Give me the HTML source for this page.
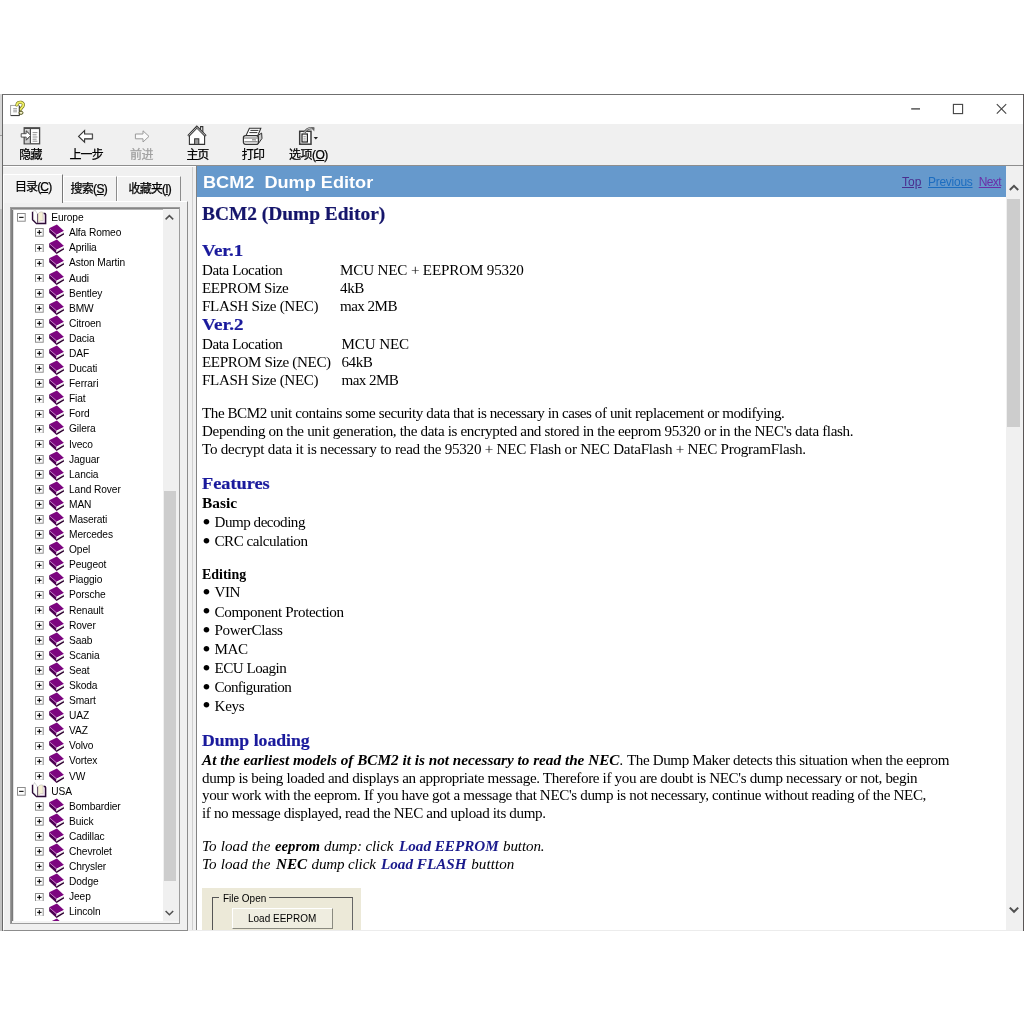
<!DOCTYPE html>
<html lang="zh"><head><meta charset="utf-8"><title>BCM2 Dump Editor</title>
<style>
html,body{margin:0;padding:0;background:#fff;}
body{width:1024px;height:1024px;position:relative;overflow:hidden;font-family:'Liberation Sans', sans-serif;}
.abs,.t,.ic{position:absolute;}
.t{white-space:pre;line-height:0;}
.t u{text-decoration:underline;}
#win{left:2px;top:94px;width:1022px;height:837px;background:#f0f0f0;}
#treeclip{left:0;top:209px;width:163px;height:712px;overflow:hidden;}
</style></head><body>
<div class="abs" style="left:0;top:94px;width:2px;height:837px;background:#c2c2c2"></div>
<div class="abs" style="left:0;top:94px;width:2px;height:115px;background:#dcdcdc"></div>
<div class="abs" style="left:0;top:94px;width:2px;height:41px;background:#d6d6d6"></div>
<div class="abs" style="left:0;top:135px;width:2px;height:1px;background:#9a9a9a"></div>
<div class="abs" id="win"></div>
<!-- title bar -->
<div class="abs" style="left:3px;top:95px;width:1020px;height:29px;background:#fff"></div>
<div class="abs" style="left:2px;top:94px;width:1022px;height:1px;background:#6f6f6f"></div>
<div class="abs" style="left:2px;top:94px;width:1px;height:837px;background:#686868"></div>
<div class="abs" style="left:1023px;top:94px;width:1px;height:837px;background:#5a5656"></div>
<!-- window controls -->
<svg class="ic" style="left:905px;top:98px" width="112" height="22" viewBox="0 0 112 22">
<path d="M6.2 10.9 H15" stroke="#3c3c3c" stroke-width="1.3" fill="none"/>
<rect x="48.4" y="6.4" width="9.2" height="9.2" fill="none" stroke="#444" stroke-width="1.1"/>
<path d="M91.8 6.2 L101.2 15.6 M101.2 6.2 L91.8 15.6" stroke="#444" stroke-width="1.1" fill="none"/>
</svg>
<!-- title icon -->
<svg class="ic" style="left:9px;top:100px" width="17" height="17" viewBox="0 0 17 17">
<rect x="1.6" y="5.4" width="8.6" height="10" fill="#fff" stroke="#9a9a9a" stroke-width="0.9"/>
<path d="M1.8 15.6 H10.4 V6" stroke="#333" stroke-width="1" fill="none"/>
<path d="M4.2 8.6 H8 M4.2 10.2 H8 M4.2 11.8 H8" stroke="#999" stroke-width="0.9"/>
<path d="M7.9 5 C8 2.7 10.2 1.9 12.2 2.3 C14.3 2.8 14.9 4.8 13.9 6.3 C13.2 7.4 12 7.9 11.8 9.2" fill="none" stroke="#6a6a18" stroke-width="3.1" stroke-linecap="round"/>
<path d="M7.9 5 C8 2.7 10.2 1.9 12.2 2.3 C14.3 2.8 14.9 4.8 13.9 6.3 C13.2 7.4 12 7.9 11.8 9.2" fill="none" stroke="#eeee66" stroke-width="1.9" stroke-linecap="round"/>
<ellipse cx="12" cy="12.8" rx="2" ry="1.6" fill="#f4f4c8" stroke="#4a4a10" stroke-width="0.9"/>
</svg>
<!-- toolbar -->
<div class="abs" style="left:3px;top:124px;width:1020px;height:41px;background:#f0f0f0"></div>
<div class="abs" style="left:3px;top:165px;width:1020px;height:1px;background:#8e8e8e"></div>
<div class="abs" style="left:3px;top:166px;width:193px;height:1px;background:#fff"></div>
<!-- hide icon -->
<svg class="ic" style="left:20px;top:126px" width="22" height="20" viewBox="0 0 22 20">
<rect x="4.2" y="1.8" width="15.4" height="16" fill="#fff" stroke="#4a4a4a" stroke-width="1.3"/>
<rect x="4.2" y="1.8" width="15.4" height="1.3" fill="#4a4a4a"/>
<rect x="5" y="3.4" width="5" height="13.8" fill="#d0d0d0"/><path d="M6 4.6 L9 7.4 M6 14.6 L9 11.6" stroke="#555" stroke-width="0.8"/>
<path d="M10.4 3 V17.6" stroke="#4a4a4a" stroke-width="1.2"/>
<path d="M12.6 6.6 H17.4 M12.6 8.8 H16.6 M12.6 11 H17.4 M12.6 13.2 H16.6 M12.6 15.2 H17.4" stroke="#777" stroke-width="0.8"/>
<path d="M1.2 7.7 H6.2 V5 L10.8 9.4 L6.2 13.8 V11.1 H1.2 Z" fill="#fff" stroke="#444" stroke-width="0.9"/>
</svg>
<!-- back icon -->
<svg class="ic" style="left:76px;top:128px" width="20" height="17" viewBox="0 0 20 17">
<path d="M2.6 8.4 L8.6 2.6 V6 H16.4 V10.8 H8.6 V14.2 Z" fill="#fff" stroke="#333" stroke-width="1.1" stroke-linejoin="miter"/>
<path d="M16.6 6.4 V11 H9" stroke="#555" stroke-width="1" fill="none"/>
</svg>
<!-- forward icon -->
<svg class="ic" style="left:132px;top:128px" width="20" height="17" viewBox="0 0 20 17">
<path d="M17 8.4 L11 2.8 V6 H3.4 V10.8 H11 V14 Z" fill="#fafafa" stroke="#9a9a9a" stroke-width="1" stroke-linejoin="miter"/>
</svg>
<!-- home icon -->
<svg class="ic" style="left:186px;top:125px" width="22" height="21" viewBox="0 0 22 21">
<path d="M14.6 6 V1.6 H16.8 V8" fill="#fff" stroke="#333" stroke-width="1.1"/>
<path d="M3.4 10.6 V19.4 H18.6 V10.6 L11 2.8 Z" fill="#fff" stroke="#333" stroke-width="1.1"/>
<path d="M2.2 11 L10.8 2 L19.8 11" fill="none" stroke="#333" stroke-width="2.4"/>
<path d="M2.6 10.6 L10.8 2.4 L19.4 10.6" fill="none" stroke="#fff" stroke-width="0.7"/>
<rect x="8.6" y="13.8" width="4.2" height="5.6" fill="#999" stroke="#333" stroke-width="1"/>
</svg>
<!-- print icon -->
<svg class="ic" style="left:242px;top:127px" width="22" height="19" viewBox="0 0 22 19">
<path d="M7.4 1.2 H18.8 L15.8 8.6 H4 Z" fill="#fff" stroke="#333" stroke-width="1.1"/>
<path d="M8.4 3.4 H16.4 M7.4 5.6 H15.4" stroke="#333" stroke-width="1"/>
<path d="M16 8.6 L19.6 6 L20 11.4 L16.4 16.6 Z" fill="#ccc" stroke="#333" stroke-width="1"/>
<rect x="1.4" y="8.6" width="15" height="8.8" rx="2.2" fill="#fff" stroke="#333" stroke-width="1.2"/>
<path d="M2 11 H16 M2.4 14.8 H15.6" stroke="#555" stroke-width="0.9"/>
<path d="M10 12.8 H14" stroke="#888" stroke-width="1.2"/>
</svg>
<!-- options icon -->
<svg class="ic" style="left:298px;top:126px" width="22" height="20" viewBox="0 0 22 20">
<rect x="1.7" y="5.3" width="11.3" height="12.9" fill="#fff" stroke="#3a3a3a" stroke-width="1.5"/>
<rect x="4" y="8" width="5.4" height="8" fill="#fff" stroke="#222" stroke-width="1.2"/>
<path d="M5.4 10.4 H7.8 M5.4 12.2 H7.8 M5.4 14 H7.8" stroke="#888" stroke-width="0.8"/>
<path d="M6.4 6.8 C8 3.4 11 1.6 15.6 2.2" fill="none" stroke="#555" stroke-width="2.4"/>
<path d="M6.4 6.8 C8 3.4 11 1.6 15.6 2.2" fill="none" stroke="#ddd" stroke-width="0.9"/>
<path d="M12.8 1 L16.6 1.4 L16.2 5.6 Z" fill="#666"/>
<path d="M15.6 11 H20 L17.8 13.6 Z" fill="#222"/>
</svg>

<!-- left panel: tabs -->
<div class="abs" style="left:3px;top:201px;width:185px;height:730px;border-top:1px solid #fff;border-left:1px solid #fff;border-right:1px solid #8c8c8c;border-bottom:1px solid #8c8c8c;box-sizing:border-box;background:#f0f0f0"></div>
<div class="abs" style="left:63px;top:176px;width:54px;height:25px;border-top:1px solid #fff;border-left:1px solid #fff;border-right:1px solid #8c8c8c;box-sizing:border-box;background:#f2f2f2"></div>
<div class="abs" style="left:117px;top:176px;width:64px;height:25px;border-top:1px solid #fff;border-left:1px solid #fff;border-right:1px solid #8c8c8c;box-sizing:border-box;background:#f2f2f2"></div>
<div class="abs" style="left:3px;top:174px;width:60px;height:29px;border-top:1px solid #fff;border-left:1px solid #fff;border-right:1px solid #777;box-sizing:border-box;background:#f3f3f3"></div>
<!-- tree box -->
<div class="abs" style="left:10px;top:207px;width:170px;height:717px;background:#9c9c9c"></div>
<div class="abs" style="left:11px;top:208px;width:168px;height:715px;background:#868686"></div>
<div class="abs" style="left:12px;top:209px;width:167px;height:714px;background:#fff"></div>
<div class="abs" style="left:12px;top:209px;width:1px;height:712px;background:#7a7a7a"></div>
<div class="abs" style="left:13px;top:209px;width:1px;height:712px;background:#e2e2e2"></div>
<div class="abs" style="left:12px;top:209px;width:167px;height:1px;background:#b4b4b4"></div>
<div class="abs" style="left:12px;top:921px;width:167px;height:2px;background:#f4f4f4"></div>
<!-- tree scrollbar -->
<div class="abs" style="left:163px;top:209px;width:16px;height:712px;background:#f0f0f0"></div>
<div class="abs" style="left:163.5px;top:491px;width:12.8px;height:390px;background:#cdcdcd"></div>
<svg class="ic" style="left:164px;top:212px" width="11" height="10" viewBox="0 0 11 10"><path d="M1.6 7.4 L5.4 3.6 L9.2 7.4" fill="none" stroke="#505050" stroke-width="1.5"/></svg>
<svg class="ic" style="left:164px;top:908px" width="11" height="10" viewBox="0 0 11 10"><path d="M1.6 3 L5.4 6.8 L9.2 3" fill="none" stroke="#505050" stroke-width="1.5"/></svg>
<!-- splitter -->
<div class="abs" style="left:192px;top:167px;width:1px;height:764px;background:#cfcfcf"></div>
<!-- right pane -->
<div class="abs" style="left:196px;top:166px;width:827px;height:765px;background:#fff"></div>
<div class="abs" style="left:196px;top:166px;width:1px;height:765px;background:#828282"></div>
<div class="abs" style="left:197px;top:166px;width:809px;height:30.5px;background:#6699cc"></div>
<!-- page scrollbar -->
<div class="abs" style="left:1006px;top:166px;width:17px;height:764px;background:#f0f0f0"></div>
<div class="abs" style="left:1007px;top:199px;width:13.2px;height:228.2px;background:#cdcdcd"></div>
<svg class="ic" style="left:1007.5px;top:182px" width="12" height="10" viewBox="0 0 12 10"><path d="M1.8 8 L6 3.8 L10.2 8" fill="none" stroke="#505050" stroke-width="2"/></svg>
<svg class="ic" style="left:1007.7px;top:905px" width="12" height="10" viewBox="0 0 12 10"><path d="M1.8 2.6 L6 6.8 L10.2 2.6" fill="none" stroke="#505050" stroke-width="2"/></svg>
<!-- embedded dialog image -->
<div class="abs" style="left:202px;top:888px;width:159px;height:42px;background:#ece9d8;overflow:hidden">
<div class="abs" style="left:9.5px;top:9px;width:141px;height:50px;border:1px solid #555;border-right-color:#666;box-sizing:border-box"></div>
<div class="abs" style="left:17px;top:4px;width:50px;height:12px;background:#ece9d8"></div>
<div class="abs" style="left:29.5px;top:20px;width:101.5px;height:20.5px;box-sizing:border-box;background:#efede0;border-top:1px solid #fff;border-left:1px solid #fff;border-right:1px solid #8a8a80;border-bottom:1.5px solid #8a8a80"></div>
</div>
<div class="abs" style="left:189px;top:930px;width:834px;height:1px;background:#ececec"></div>

<div class="abs" id="treeclip"><div class="abs" style="left:0;top:-209px"><svg class="ic" style="left:17.00px;top:213.40px" width="8.7" height="8.7" viewBox="0 0 9 9"><rect x="0.5" y="0.5" width="8" height="8" fill="#fff" stroke="#8a8a8a" stroke-width="1"/><path d="M2.2 4.5 H6.8" stroke="#000" stroke-width="1.1"/></svg><svg class="ic" style="left:31.00px;top:208.70px" width="16" height="16" viewBox="0 0 16 16"><polygon points="7,13.7 12.3,11.7 12.3,4.5 13.9,5 13.9,13.9" fill="#f3e6f3"/><path d="M1.6 2.7 L1.6 10.6 L5.5 14.6 L14.6 14.6 L14.6 5.4 C14.6 4.5 13.6 4.2 12.6 4.2" fill="none" stroke="#2d0b38" stroke-width="1.5"/><path d="M3.5 0.5 L2.5 2.9 L2.6 10.2 L5.6 13.7 L6.4 13.7 L6.4 4.8 C5.6 3.4 4.6 2 3.5 0.5 Z" fill="#fff" stroke="#b0b0b0" stroke-width="0.5"/><path d="M6.7 4.8 V13.9" stroke="#2d0b38" stroke-width="0.9"/><path d="M7.1 5 C7.7 3.2 10 2.4 11.8 3.2 L12.2 11.6 C10.5 11.2 8.5 12 7.1 13.5 Z" fill="#f6f1d6" stroke="#b5aca8" stroke-width="0.5"/></svg><svg class="ic" style="left:35.00px;top:228.49px" width="8.7" height="8.7" viewBox="0 0 9 9"><rect x="0.5" y="0.5" width="8" height="8" fill="#fff" stroke="#8a8a8a" stroke-width="1"/><path d="M2.2 4.5 H6.8" stroke="#000" stroke-width="1.1"/><path d="M4.5 2.2 V6.8" stroke="#000" stroke-width="1.1"/></svg><svg class="ic" style="left:49.00px;top:224.29px" width="15.1" height="15.1" viewBox="0 0 16 16"><polygon points="0.2,4.6 8.4,0.5 15.9,7.5 8,11.5" fill="#7c057f"/><polygon points="0.2,4.6 8,11.5 7.7,15.6 0.2,8.8" fill="#4d0052"/><polygon points="8,11.5 15.9,7.5 15.9,9.9 7.8,14.8" fill="#fff"/><path d="M7.6 15.2 L15.9 10.2" stroke="#2e0030" stroke-width="1.5" fill="none"/><path d="M8 13.2 L15.9 8.8" stroke="#c9c9c9" stroke-width="0.5" fill="none"/><path d="M1 5.5 L8 11.7" stroke="#d27fd6" stroke-width="0.9" fill="none"/></svg><svg class="ic" style="left:35.00px;top:243.58px" width="8.7" height="8.7" viewBox="0 0 9 9"><rect x="0.5" y="0.5" width="8" height="8" fill="#fff" stroke="#8a8a8a" stroke-width="1"/><path d="M2.2 4.5 H6.8" stroke="#000" stroke-width="1.1"/><path d="M4.5 2.2 V6.8" stroke="#000" stroke-width="1.1"/></svg><svg class="ic" style="left:49.00px;top:239.38px" width="15.1" height="15.1" viewBox="0 0 16 16"><polygon points="0.2,4.6 8.4,0.5 15.9,7.5 8,11.5" fill="#7c057f"/><polygon points="0.2,4.6 8,11.5 7.7,15.6 0.2,8.8" fill="#4d0052"/><polygon points="8,11.5 15.9,7.5 15.9,9.9 7.8,14.8" fill="#fff"/><path d="M7.6 15.2 L15.9 10.2" stroke="#2e0030" stroke-width="1.5" fill="none"/><path d="M8 13.2 L15.9 8.8" stroke="#c9c9c9" stroke-width="0.5" fill="none"/><path d="M1 5.5 L8 11.7" stroke="#d27fd6" stroke-width="0.9" fill="none"/></svg><svg class="ic" style="left:35.00px;top:258.67px" width="8.7" height="8.7" viewBox="0 0 9 9"><rect x="0.5" y="0.5" width="8" height="8" fill="#fff" stroke="#8a8a8a" stroke-width="1"/><path d="M2.2 4.5 H6.8" stroke="#000" stroke-width="1.1"/><path d="M4.5 2.2 V6.8" stroke="#000" stroke-width="1.1"/></svg><svg class="ic" style="left:49.00px;top:254.47px" width="15.1" height="15.1" viewBox="0 0 16 16"><polygon points="0.2,4.6 8.4,0.5 15.9,7.5 8,11.5" fill="#7c057f"/><polygon points="0.2,4.6 8,11.5 7.7,15.6 0.2,8.8" fill="#4d0052"/><polygon points="8,11.5 15.9,7.5 15.9,9.9 7.8,14.8" fill="#fff"/><path d="M7.6 15.2 L15.9 10.2" stroke="#2e0030" stroke-width="1.5" fill="none"/><path d="M8 13.2 L15.9 8.8" stroke="#c9c9c9" stroke-width="0.5" fill="none"/><path d="M1 5.5 L8 11.7" stroke="#d27fd6" stroke-width="0.9" fill="none"/></svg><svg class="ic" style="left:35.00px;top:273.77px" width="8.7" height="8.7" viewBox="0 0 9 9"><rect x="0.5" y="0.5" width="8" height="8" fill="#fff" stroke="#8a8a8a" stroke-width="1"/><path d="M2.2 4.5 H6.8" stroke="#000" stroke-width="1.1"/><path d="M4.5 2.2 V6.8" stroke="#000" stroke-width="1.1"/></svg><svg class="ic" style="left:49.00px;top:269.57px" width="15.1" height="15.1" viewBox="0 0 16 16"><polygon points="0.2,4.6 8.4,0.5 15.9,7.5 8,11.5" fill="#7c057f"/><polygon points="0.2,4.6 8,11.5 7.7,15.6 0.2,8.8" fill="#4d0052"/><polygon points="8,11.5 15.9,7.5 15.9,9.9 7.8,14.8" fill="#fff"/><path d="M7.6 15.2 L15.9 10.2" stroke="#2e0030" stroke-width="1.5" fill="none"/><path d="M8 13.2 L15.9 8.8" stroke="#c9c9c9" stroke-width="0.5" fill="none"/><path d="M1 5.5 L8 11.7" stroke="#d27fd6" stroke-width="0.9" fill="none"/></svg><svg class="ic" style="left:35.00px;top:288.86px" width="8.7" height="8.7" viewBox="0 0 9 9"><rect x="0.5" y="0.5" width="8" height="8" fill="#fff" stroke="#8a8a8a" stroke-width="1"/><path d="M2.2 4.5 H6.8" stroke="#000" stroke-width="1.1"/><path d="M4.5 2.2 V6.8" stroke="#000" stroke-width="1.1"/></svg><svg class="ic" style="left:49.00px;top:284.66px" width="15.1" height="15.1" viewBox="0 0 16 16"><polygon points="0.2,4.6 8.4,0.5 15.9,7.5 8,11.5" fill="#7c057f"/><polygon points="0.2,4.6 8,11.5 7.7,15.6 0.2,8.8" fill="#4d0052"/><polygon points="8,11.5 15.9,7.5 15.9,9.9 7.8,14.8" fill="#fff"/><path d="M7.6 15.2 L15.9 10.2" stroke="#2e0030" stroke-width="1.5" fill="none"/><path d="M8 13.2 L15.9 8.8" stroke="#c9c9c9" stroke-width="0.5" fill="none"/><path d="M1 5.5 L8 11.7" stroke="#d27fd6" stroke-width="0.9" fill="none"/></svg><svg class="ic" style="left:35.00px;top:303.95px" width="8.7" height="8.7" viewBox="0 0 9 9"><rect x="0.5" y="0.5" width="8" height="8" fill="#fff" stroke="#8a8a8a" stroke-width="1"/><path d="M2.2 4.5 H6.8" stroke="#000" stroke-width="1.1"/><path d="M4.5 2.2 V6.8" stroke="#000" stroke-width="1.1"/></svg><svg class="ic" style="left:49.00px;top:299.75px" width="15.1" height="15.1" viewBox="0 0 16 16"><polygon points="0.2,4.6 8.4,0.5 15.9,7.5 8,11.5" fill="#7c057f"/><polygon points="0.2,4.6 8,11.5 7.7,15.6 0.2,8.8" fill="#4d0052"/><polygon points="8,11.5 15.9,7.5 15.9,9.9 7.8,14.8" fill="#fff"/><path d="M7.6 15.2 L15.9 10.2" stroke="#2e0030" stroke-width="1.5" fill="none"/><path d="M8 13.2 L15.9 8.8" stroke="#c9c9c9" stroke-width="0.5" fill="none"/><path d="M1 5.5 L8 11.7" stroke="#d27fd6" stroke-width="0.9" fill="none"/></svg><svg class="ic" style="left:35.00px;top:319.04px" width="8.7" height="8.7" viewBox="0 0 9 9"><rect x="0.5" y="0.5" width="8" height="8" fill="#fff" stroke="#8a8a8a" stroke-width="1"/><path d="M2.2 4.5 H6.8" stroke="#000" stroke-width="1.1"/><path d="M4.5 2.2 V6.8" stroke="#000" stroke-width="1.1"/></svg><svg class="ic" style="left:49.00px;top:314.84px" width="15.1" height="15.1" viewBox="0 0 16 16"><polygon points="0.2,4.6 8.4,0.5 15.9,7.5 8,11.5" fill="#7c057f"/><polygon points="0.2,4.6 8,11.5 7.7,15.6 0.2,8.8" fill="#4d0052"/><polygon points="8,11.5 15.9,7.5 15.9,9.9 7.8,14.8" fill="#fff"/><path d="M7.6 15.2 L15.9 10.2" stroke="#2e0030" stroke-width="1.5" fill="none"/><path d="M8 13.2 L15.9 8.8" stroke="#c9c9c9" stroke-width="0.5" fill="none"/><path d="M1 5.5 L8 11.7" stroke="#d27fd6" stroke-width="0.9" fill="none"/></svg><svg class="ic" style="left:35.00px;top:334.13px" width="8.7" height="8.7" viewBox="0 0 9 9"><rect x="0.5" y="0.5" width="8" height="8" fill="#fff" stroke="#8a8a8a" stroke-width="1"/><path d="M2.2 4.5 H6.8" stroke="#000" stroke-width="1.1"/><path d="M4.5 2.2 V6.8" stroke="#000" stroke-width="1.1"/></svg><svg class="ic" style="left:49.00px;top:329.93px" width="15.1" height="15.1" viewBox="0 0 16 16"><polygon points="0.2,4.6 8.4,0.5 15.9,7.5 8,11.5" fill="#7c057f"/><polygon points="0.2,4.6 8,11.5 7.7,15.6 0.2,8.8" fill="#4d0052"/><polygon points="8,11.5 15.9,7.5 15.9,9.9 7.8,14.8" fill="#fff"/><path d="M7.6 15.2 L15.9 10.2" stroke="#2e0030" stroke-width="1.5" fill="none"/><path d="M8 13.2 L15.9 8.8" stroke="#c9c9c9" stroke-width="0.5" fill="none"/><path d="M1 5.5 L8 11.7" stroke="#d27fd6" stroke-width="0.9" fill="none"/></svg><svg class="ic" style="left:35.00px;top:349.22px" width="8.7" height="8.7" viewBox="0 0 9 9"><rect x="0.5" y="0.5" width="8" height="8" fill="#fff" stroke="#8a8a8a" stroke-width="1"/><path d="M2.2 4.5 H6.8" stroke="#000" stroke-width="1.1"/><path d="M4.5 2.2 V6.8" stroke="#000" stroke-width="1.1"/></svg><svg class="ic" style="left:49.00px;top:345.02px" width="15.1" height="15.1" viewBox="0 0 16 16"><polygon points="0.2,4.6 8.4,0.5 15.9,7.5 8,11.5" fill="#7c057f"/><polygon points="0.2,4.6 8,11.5 7.7,15.6 0.2,8.8" fill="#4d0052"/><polygon points="8,11.5 15.9,7.5 15.9,9.9 7.8,14.8" fill="#fff"/><path d="M7.6 15.2 L15.9 10.2" stroke="#2e0030" stroke-width="1.5" fill="none"/><path d="M8 13.2 L15.9 8.8" stroke="#c9c9c9" stroke-width="0.5" fill="none"/><path d="M1 5.5 L8 11.7" stroke="#d27fd6" stroke-width="0.9" fill="none"/></svg><svg class="ic" style="left:35.00px;top:364.31px" width="8.7" height="8.7" viewBox="0 0 9 9"><rect x="0.5" y="0.5" width="8" height="8" fill="#fff" stroke="#8a8a8a" stroke-width="1"/><path d="M2.2 4.5 H6.8" stroke="#000" stroke-width="1.1"/><path d="M4.5 2.2 V6.8" stroke="#000" stroke-width="1.1"/></svg><svg class="ic" style="left:49.00px;top:360.11px" width="15.1" height="15.1" viewBox="0 0 16 16"><polygon points="0.2,4.6 8.4,0.5 15.9,7.5 8,11.5" fill="#7c057f"/><polygon points="0.2,4.6 8,11.5 7.7,15.6 0.2,8.8" fill="#4d0052"/><polygon points="8,11.5 15.9,7.5 15.9,9.9 7.8,14.8" fill="#fff"/><path d="M7.6 15.2 L15.9 10.2" stroke="#2e0030" stroke-width="1.5" fill="none"/><path d="M8 13.2 L15.9 8.8" stroke="#c9c9c9" stroke-width="0.5" fill="none"/><path d="M1 5.5 L8 11.7" stroke="#d27fd6" stroke-width="0.9" fill="none"/></svg><svg class="ic" style="left:35.00px;top:379.40px" width="8.7" height="8.7" viewBox="0 0 9 9"><rect x="0.5" y="0.5" width="8" height="8" fill="#fff" stroke="#8a8a8a" stroke-width="1"/><path d="M2.2 4.5 H6.8" stroke="#000" stroke-width="1.1"/><path d="M4.5 2.2 V6.8" stroke="#000" stroke-width="1.1"/></svg><svg class="ic" style="left:49.00px;top:375.20px" width="15.1" height="15.1" viewBox="0 0 16 16"><polygon points="0.2,4.6 8.4,0.5 15.9,7.5 8,11.5" fill="#7c057f"/><polygon points="0.2,4.6 8,11.5 7.7,15.6 0.2,8.8" fill="#4d0052"/><polygon points="8,11.5 15.9,7.5 15.9,9.9 7.8,14.8" fill="#fff"/><path d="M7.6 15.2 L15.9 10.2" stroke="#2e0030" stroke-width="1.5" fill="none"/><path d="M8 13.2 L15.9 8.8" stroke="#c9c9c9" stroke-width="0.5" fill="none"/><path d="M1 5.5 L8 11.7" stroke="#d27fd6" stroke-width="0.9" fill="none"/></svg><svg class="ic" style="left:35.00px;top:394.50px" width="8.7" height="8.7" viewBox="0 0 9 9"><rect x="0.5" y="0.5" width="8" height="8" fill="#fff" stroke="#8a8a8a" stroke-width="1"/><path d="M2.2 4.5 H6.8" stroke="#000" stroke-width="1.1"/><path d="M4.5 2.2 V6.8" stroke="#000" stroke-width="1.1"/></svg><svg class="ic" style="left:49.00px;top:390.30px" width="15.1" height="15.1" viewBox="0 0 16 16"><polygon points="0.2,4.6 8.4,0.5 15.9,7.5 8,11.5" fill="#7c057f"/><polygon points="0.2,4.6 8,11.5 7.7,15.6 0.2,8.8" fill="#4d0052"/><polygon points="8,11.5 15.9,7.5 15.9,9.9 7.8,14.8" fill="#fff"/><path d="M7.6 15.2 L15.9 10.2" stroke="#2e0030" stroke-width="1.5" fill="none"/><path d="M8 13.2 L15.9 8.8" stroke="#c9c9c9" stroke-width="0.5" fill="none"/><path d="M1 5.5 L8 11.7" stroke="#d27fd6" stroke-width="0.9" fill="none"/></svg><svg class="ic" style="left:35.00px;top:409.59px" width="8.7" height="8.7" viewBox="0 0 9 9"><rect x="0.5" y="0.5" width="8" height="8" fill="#fff" stroke="#8a8a8a" stroke-width="1"/><path d="M2.2 4.5 H6.8" stroke="#000" stroke-width="1.1"/><path d="M4.5 2.2 V6.8" stroke="#000" stroke-width="1.1"/></svg><svg class="ic" style="left:49.00px;top:405.39px" width="15.1" height="15.1" viewBox="0 0 16 16"><polygon points="0.2,4.6 8.4,0.5 15.9,7.5 8,11.5" fill="#7c057f"/><polygon points="0.2,4.6 8,11.5 7.7,15.6 0.2,8.8" fill="#4d0052"/><polygon points="8,11.5 15.9,7.5 15.9,9.9 7.8,14.8" fill="#fff"/><path d="M7.6 15.2 L15.9 10.2" stroke="#2e0030" stroke-width="1.5" fill="none"/><path d="M8 13.2 L15.9 8.8" stroke="#c9c9c9" stroke-width="0.5" fill="none"/><path d="M1 5.5 L8 11.7" stroke="#d27fd6" stroke-width="0.9" fill="none"/></svg><svg class="ic" style="left:35.00px;top:424.68px" width="8.7" height="8.7" viewBox="0 0 9 9"><rect x="0.5" y="0.5" width="8" height="8" fill="#fff" stroke="#8a8a8a" stroke-width="1"/><path d="M2.2 4.5 H6.8" stroke="#000" stroke-width="1.1"/><path d="M4.5 2.2 V6.8" stroke="#000" stroke-width="1.1"/></svg><svg class="ic" style="left:49.00px;top:420.48px" width="15.1" height="15.1" viewBox="0 0 16 16"><polygon points="0.2,4.6 8.4,0.5 15.9,7.5 8,11.5" fill="#7c057f"/><polygon points="0.2,4.6 8,11.5 7.7,15.6 0.2,8.8" fill="#4d0052"/><polygon points="8,11.5 15.9,7.5 15.9,9.9 7.8,14.8" fill="#fff"/><path d="M7.6 15.2 L15.9 10.2" stroke="#2e0030" stroke-width="1.5" fill="none"/><path d="M8 13.2 L15.9 8.8" stroke="#c9c9c9" stroke-width="0.5" fill="none"/><path d="M1 5.5 L8 11.7" stroke="#d27fd6" stroke-width="0.9" fill="none"/></svg><svg class="ic" style="left:35.00px;top:439.77px" width="8.7" height="8.7" viewBox="0 0 9 9"><rect x="0.5" y="0.5" width="8" height="8" fill="#fff" stroke="#8a8a8a" stroke-width="1"/><path d="M2.2 4.5 H6.8" stroke="#000" stroke-width="1.1"/><path d="M4.5 2.2 V6.8" stroke="#000" stroke-width="1.1"/></svg><svg class="ic" style="left:49.00px;top:435.57px" width="15.1" height="15.1" viewBox="0 0 16 16"><polygon points="0.2,4.6 8.4,0.5 15.9,7.5 8,11.5" fill="#7c057f"/><polygon points="0.2,4.6 8,11.5 7.7,15.6 0.2,8.8" fill="#4d0052"/><polygon points="8,11.5 15.9,7.5 15.9,9.9 7.8,14.8" fill="#fff"/><path d="M7.6 15.2 L15.9 10.2" stroke="#2e0030" stroke-width="1.5" fill="none"/><path d="M8 13.2 L15.9 8.8" stroke="#c9c9c9" stroke-width="0.5" fill="none"/><path d="M1 5.5 L8 11.7" stroke="#d27fd6" stroke-width="0.9" fill="none"/></svg><svg class="ic" style="left:35.00px;top:454.86px" width="8.7" height="8.7" viewBox="0 0 9 9"><rect x="0.5" y="0.5" width="8" height="8" fill="#fff" stroke="#8a8a8a" stroke-width="1"/><path d="M2.2 4.5 H6.8" stroke="#000" stroke-width="1.1"/><path d="M4.5 2.2 V6.8" stroke="#000" stroke-width="1.1"/></svg><svg class="ic" style="left:49.00px;top:450.66px" width="15.1" height="15.1" viewBox="0 0 16 16"><polygon points="0.2,4.6 8.4,0.5 15.9,7.5 8,11.5" fill="#7c057f"/><polygon points="0.2,4.6 8,11.5 7.7,15.6 0.2,8.8" fill="#4d0052"/><polygon points="8,11.5 15.9,7.5 15.9,9.9 7.8,14.8" fill="#fff"/><path d="M7.6 15.2 L15.9 10.2" stroke="#2e0030" stroke-width="1.5" fill="none"/><path d="M8 13.2 L15.9 8.8" stroke="#c9c9c9" stroke-width="0.5" fill="none"/><path d="M1 5.5 L8 11.7" stroke="#d27fd6" stroke-width="0.9" fill="none"/></svg><svg class="ic" style="left:35.00px;top:469.95px" width="8.7" height="8.7" viewBox="0 0 9 9"><rect x="0.5" y="0.5" width="8" height="8" fill="#fff" stroke="#8a8a8a" stroke-width="1"/><path d="M2.2 4.5 H6.8" stroke="#000" stroke-width="1.1"/><path d="M4.5 2.2 V6.8" stroke="#000" stroke-width="1.1"/></svg><svg class="ic" style="left:49.00px;top:465.75px" width="15.1" height="15.1" viewBox="0 0 16 16"><polygon points="0.2,4.6 8.4,0.5 15.9,7.5 8,11.5" fill="#7c057f"/><polygon points="0.2,4.6 8,11.5 7.7,15.6 0.2,8.8" fill="#4d0052"/><polygon points="8,11.5 15.9,7.5 15.9,9.9 7.8,14.8" fill="#fff"/><path d="M7.6 15.2 L15.9 10.2" stroke="#2e0030" stroke-width="1.5" fill="none"/><path d="M8 13.2 L15.9 8.8" stroke="#c9c9c9" stroke-width="0.5" fill="none"/><path d="M1 5.5 L8 11.7" stroke="#d27fd6" stroke-width="0.9" fill="none"/></svg><svg class="ic" style="left:35.00px;top:485.04px" width="8.7" height="8.7" viewBox="0 0 9 9"><rect x="0.5" y="0.5" width="8" height="8" fill="#fff" stroke="#8a8a8a" stroke-width="1"/><path d="M2.2 4.5 H6.8" stroke="#000" stroke-width="1.1"/><path d="M4.5 2.2 V6.8" stroke="#000" stroke-width="1.1"/></svg><svg class="ic" style="left:49.00px;top:480.84px" width="15.1" height="15.1" viewBox="0 0 16 16"><polygon points="0.2,4.6 8.4,0.5 15.9,7.5 8,11.5" fill="#7c057f"/><polygon points="0.2,4.6 8,11.5 7.7,15.6 0.2,8.8" fill="#4d0052"/><polygon points="8,11.5 15.9,7.5 15.9,9.9 7.8,14.8" fill="#fff"/><path d="M7.6 15.2 L15.9 10.2" stroke="#2e0030" stroke-width="1.5" fill="none"/><path d="M8 13.2 L15.9 8.8" stroke="#c9c9c9" stroke-width="0.5" fill="none"/><path d="M1 5.5 L8 11.7" stroke="#d27fd6" stroke-width="0.9" fill="none"/></svg><svg class="ic" style="left:35.00px;top:500.13px" width="8.7" height="8.7" viewBox="0 0 9 9"><rect x="0.5" y="0.5" width="8" height="8" fill="#fff" stroke="#8a8a8a" stroke-width="1"/><path d="M2.2 4.5 H6.8" stroke="#000" stroke-width="1.1"/><path d="M4.5 2.2 V6.8" stroke="#000" stroke-width="1.1"/></svg><svg class="ic" style="left:49.00px;top:495.93px" width="15.1" height="15.1" viewBox="0 0 16 16"><polygon points="0.2,4.6 8.4,0.5 15.9,7.5 8,11.5" fill="#7c057f"/><polygon points="0.2,4.6 8,11.5 7.7,15.6 0.2,8.8" fill="#4d0052"/><polygon points="8,11.5 15.9,7.5 15.9,9.9 7.8,14.8" fill="#fff"/><path d="M7.6 15.2 L15.9 10.2" stroke="#2e0030" stroke-width="1.5" fill="none"/><path d="M8 13.2 L15.9 8.8" stroke="#c9c9c9" stroke-width="0.5" fill="none"/><path d="M1 5.5 L8 11.7" stroke="#d27fd6" stroke-width="0.9" fill="none"/></svg><svg class="ic" style="left:35.00px;top:515.23px" width="8.7" height="8.7" viewBox="0 0 9 9"><rect x="0.5" y="0.5" width="8" height="8" fill="#fff" stroke="#8a8a8a" stroke-width="1"/><path d="M2.2 4.5 H6.8" stroke="#000" stroke-width="1.1"/><path d="M4.5 2.2 V6.8" stroke="#000" stroke-width="1.1"/></svg><svg class="ic" style="left:49.00px;top:511.03px" width="15.1" height="15.1" viewBox="0 0 16 16"><polygon points="0.2,4.6 8.4,0.5 15.9,7.5 8,11.5" fill="#7c057f"/><polygon points="0.2,4.6 8,11.5 7.7,15.6 0.2,8.8" fill="#4d0052"/><polygon points="8,11.5 15.9,7.5 15.9,9.9 7.8,14.8" fill="#fff"/><path d="M7.6 15.2 L15.9 10.2" stroke="#2e0030" stroke-width="1.5" fill="none"/><path d="M8 13.2 L15.9 8.8" stroke="#c9c9c9" stroke-width="0.5" fill="none"/><path d="M1 5.5 L8 11.7" stroke="#d27fd6" stroke-width="0.9" fill="none"/></svg><svg class="ic" style="left:35.00px;top:530.32px" width="8.7" height="8.7" viewBox="0 0 9 9"><rect x="0.5" y="0.5" width="8" height="8" fill="#fff" stroke="#8a8a8a" stroke-width="1"/><path d="M2.2 4.5 H6.8" stroke="#000" stroke-width="1.1"/><path d="M4.5 2.2 V6.8" stroke="#000" stroke-width="1.1"/></svg><svg class="ic" style="left:49.00px;top:526.12px" width="15.1" height="15.1" viewBox="0 0 16 16"><polygon points="0.2,4.6 8.4,0.5 15.9,7.5 8,11.5" fill="#7c057f"/><polygon points="0.2,4.6 8,11.5 7.7,15.6 0.2,8.8" fill="#4d0052"/><polygon points="8,11.5 15.9,7.5 15.9,9.9 7.8,14.8" fill="#fff"/><path d="M7.6 15.2 L15.9 10.2" stroke="#2e0030" stroke-width="1.5" fill="none"/><path d="M8 13.2 L15.9 8.8" stroke="#c9c9c9" stroke-width="0.5" fill="none"/><path d="M1 5.5 L8 11.7" stroke="#d27fd6" stroke-width="0.9" fill="none"/></svg><svg class="ic" style="left:35.00px;top:545.41px" width="8.7" height="8.7" viewBox="0 0 9 9"><rect x="0.5" y="0.5" width="8" height="8" fill="#fff" stroke="#8a8a8a" stroke-width="1"/><path d="M2.2 4.5 H6.8" stroke="#000" stroke-width="1.1"/><path d="M4.5 2.2 V6.8" stroke="#000" stroke-width="1.1"/></svg><svg class="ic" style="left:49.00px;top:541.21px" width="15.1" height="15.1" viewBox="0 0 16 16"><polygon points="0.2,4.6 8.4,0.5 15.9,7.5 8,11.5" fill="#7c057f"/><polygon points="0.2,4.6 8,11.5 7.7,15.6 0.2,8.8" fill="#4d0052"/><polygon points="8,11.5 15.9,7.5 15.9,9.9 7.8,14.8" fill="#fff"/><path d="M7.6 15.2 L15.9 10.2" stroke="#2e0030" stroke-width="1.5" fill="none"/><path d="M8 13.2 L15.9 8.8" stroke="#c9c9c9" stroke-width="0.5" fill="none"/><path d="M1 5.5 L8 11.7" stroke="#d27fd6" stroke-width="0.9" fill="none"/></svg><svg class="ic" style="left:35.00px;top:560.50px" width="8.7" height="8.7" viewBox="0 0 9 9"><rect x="0.5" y="0.5" width="8" height="8" fill="#fff" stroke="#8a8a8a" stroke-width="1"/><path d="M2.2 4.5 H6.8" stroke="#000" stroke-width="1.1"/><path d="M4.5 2.2 V6.8" stroke="#000" stroke-width="1.1"/></svg><svg class="ic" style="left:49.00px;top:556.30px" width="15.1" height="15.1" viewBox="0 0 16 16"><polygon points="0.2,4.6 8.4,0.5 15.9,7.5 8,11.5" fill="#7c057f"/><polygon points="0.2,4.6 8,11.5 7.7,15.6 0.2,8.8" fill="#4d0052"/><polygon points="8,11.5 15.9,7.5 15.9,9.9 7.8,14.8" fill="#fff"/><path d="M7.6 15.2 L15.9 10.2" stroke="#2e0030" stroke-width="1.5" fill="none"/><path d="M8 13.2 L15.9 8.8" stroke="#c9c9c9" stroke-width="0.5" fill="none"/><path d="M1 5.5 L8 11.7" stroke="#d27fd6" stroke-width="0.9" fill="none"/></svg><svg class="ic" style="left:35.00px;top:575.59px" width="8.7" height="8.7" viewBox="0 0 9 9"><rect x="0.5" y="0.5" width="8" height="8" fill="#fff" stroke="#8a8a8a" stroke-width="1"/><path d="M2.2 4.5 H6.8" stroke="#000" stroke-width="1.1"/><path d="M4.5 2.2 V6.8" stroke="#000" stroke-width="1.1"/></svg><svg class="ic" style="left:49.00px;top:571.39px" width="15.1" height="15.1" viewBox="0 0 16 16"><polygon points="0.2,4.6 8.4,0.5 15.9,7.5 8,11.5" fill="#7c057f"/><polygon points="0.2,4.6 8,11.5 7.7,15.6 0.2,8.8" fill="#4d0052"/><polygon points="8,11.5 15.9,7.5 15.9,9.9 7.8,14.8" fill="#fff"/><path d="M7.6 15.2 L15.9 10.2" stroke="#2e0030" stroke-width="1.5" fill="none"/><path d="M8 13.2 L15.9 8.8" stroke="#c9c9c9" stroke-width="0.5" fill="none"/><path d="M1 5.5 L8 11.7" stroke="#d27fd6" stroke-width="0.9" fill="none"/></svg><svg class="ic" style="left:35.00px;top:590.68px" width="8.7" height="8.7" viewBox="0 0 9 9"><rect x="0.5" y="0.5" width="8" height="8" fill="#fff" stroke="#8a8a8a" stroke-width="1"/><path d="M2.2 4.5 H6.8" stroke="#000" stroke-width="1.1"/><path d="M4.5 2.2 V6.8" stroke="#000" stroke-width="1.1"/></svg><svg class="ic" style="left:49.00px;top:586.48px" width="15.1" height="15.1" viewBox="0 0 16 16"><polygon points="0.2,4.6 8.4,0.5 15.9,7.5 8,11.5" fill="#7c057f"/><polygon points="0.2,4.6 8,11.5 7.7,15.6 0.2,8.8" fill="#4d0052"/><polygon points="8,11.5 15.9,7.5 15.9,9.9 7.8,14.8" fill="#fff"/><path d="M7.6 15.2 L15.9 10.2" stroke="#2e0030" stroke-width="1.5" fill="none"/><path d="M8 13.2 L15.9 8.8" stroke="#c9c9c9" stroke-width="0.5" fill="none"/><path d="M1 5.5 L8 11.7" stroke="#d27fd6" stroke-width="0.9" fill="none"/></svg><svg class="ic" style="left:35.00px;top:605.77px" width="8.7" height="8.7" viewBox="0 0 9 9"><rect x="0.5" y="0.5" width="8" height="8" fill="#fff" stroke="#8a8a8a" stroke-width="1"/><path d="M2.2 4.5 H6.8" stroke="#000" stroke-width="1.1"/><path d="M4.5 2.2 V6.8" stroke="#000" stroke-width="1.1"/></svg><svg class="ic" style="left:49.00px;top:601.57px" width="15.1" height="15.1" viewBox="0 0 16 16"><polygon points="0.2,4.6 8.4,0.5 15.9,7.5 8,11.5" fill="#7c057f"/><polygon points="0.2,4.6 8,11.5 7.7,15.6 0.2,8.8" fill="#4d0052"/><polygon points="8,11.5 15.9,7.5 15.9,9.9 7.8,14.8" fill="#fff"/><path d="M7.6 15.2 L15.9 10.2" stroke="#2e0030" stroke-width="1.5" fill="none"/><path d="M8 13.2 L15.9 8.8" stroke="#c9c9c9" stroke-width="0.5" fill="none"/><path d="M1 5.5 L8 11.7" stroke="#d27fd6" stroke-width="0.9" fill="none"/></svg><svg class="ic" style="left:35.00px;top:620.87px" width="8.7" height="8.7" viewBox="0 0 9 9"><rect x="0.5" y="0.5" width="8" height="8" fill="#fff" stroke="#8a8a8a" stroke-width="1"/><path d="M2.2 4.5 H6.8" stroke="#000" stroke-width="1.1"/><path d="M4.5 2.2 V6.8" stroke="#000" stroke-width="1.1"/></svg><svg class="ic" style="left:49.00px;top:616.67px" width="15.1" height="15.1" viewBox="0 0 16 16"><polygon points="0.2,4.6 8.4,0.5 15.9,7.5 8,11.5" fill="#7c057f"/><polygon points="0.2,4.6 8,11.5 7.7,15.6 0.2,8.8" fill="#4d0052"/><polygon points="8,11.5 15.9,7.5 15.9,9.9 7.8,14.8" fill="#fff"/><path d="M7.6 15.2 L15.9 10.2" stroke="#2e0030" stroke-width="1.5" fill="none"/><path d="M8 13.2 L15.9 8.8" stroke="#c9c9c9" stroke-width="0.5" fill="none"/><path d="M1 5.5 L8 11.7" stroke="#d27fd6" stroke-width="0.9" fill="none"/></svg><svg class="ic" style="left:35.00px;top:635.96px" width="8.7" height="8.7" viewBox="0 0 9 9"><rect x="0.5" y="0.5" width="8" height="8" fill="#fff" stroke="#8a8a8a" stroke-width="1"/><path d="M2.2 4.5 H6.8" stroke="#000" stroke-width="1.1"/><path d="M4.5 2.2 V6.8" stroke="#000" stroke-width="1.1"/></svg><svg class="ic" style="left:49.00px;top:631.76px" width="15.1" height="15.1" viewBox="0 0 16 16"><polygon points="0.2,4.6 8.4,0.5 15.9,7.5 8,11.5" fill="#7c057f"/><polygon points="0.2,4.6 8,11.5 7.7,15.6 0.2,8.8" fill="#4d0052"/><polygon points="8,11.5 15.9,7.5 15.9,9.9 7.8,14.8" fill="#fff"/><path d="M7.6 15.2 L15.9 10.2" stroke="#2e0030" stroke-width="1.5" fill="none"/><path d="M8 13.2 L15.9 8.8" stroke="#c9c9c9" stroke-width="0.5" fill="none"/><path d="M1 5.5 L8 11.7" stroke="#d27fd6" stroke-width="0.9" fill="none"/></svg><svg class="ic" style="left:35.00px;top:651.05px" width="8.7" height="8.7" viewBox="0 0 9 9"><rect x="0.5" y="0.5" width="8" height="8" fill="#fff" stroke="#8a8a8a" stroke-width="1"/><path d="M2.2 4.5 H6.8" stroke="#000" stroke-width="1.1"/><path d="M4.5 2.2 V6.8" stroke="#000" stroke-width="1.1"/></svg><svg class="ic" style="left:49.00px;top:646.85px" width="15.1" height="15.1" viewBox="0 0 16 16"><polygon points="0.2,4.6 8.4,0.5 15.9,7.5 8,11.5" fill="#7c057f"/><polygon points="0.2,4.6 8,11.5 7.7,15.6 0.2,8.8" fill="#4d0052"/><polygon points="8,11.5 15.9,7.5 15.9,9.9 7.8,14.8" fill="#fff"/><path d="M7.6 15.2 L15.9 10.2" stroke="#2e0030" stroke-width="1.5" fill="none"/><path d="M8 13.2 L15.9 8.8" stroke="#c9c9c9" stroke-width="0.5" fill="none"/><path d="M1 5.5 L8 11.7" stroke="#d27fd6" stroke-width="0.9" fill="none"/></svg><svg class="ic" style="left:35.00px;top:666.14px" width="8.7" height="8.7" viewBox="0 0 9 9"><rect x="0.5" y="0.5" width="8" height="8" fill="#fff" stroke="#8a8a8a" stroke-width="1"/><path d="M2.2 4.5 H6.8" stroke="#000" stroke-width="1.1"/><path d="M4.5 2.2 V6.8" stroke="#000" stroke-width="1.1"/></svg><svg class="ic" style="left:49.00px;top:661.94px" width="15.1" height="15.1" viewBox="0 0 16 16"><polygon points="0.2,4.6 8.4,0.5 15.9,7.5 8,11.5" fill="#7c057f"/><polygon points="0.2,4.6 8,11.5 7.7,15.6 0.2,8.8" fill="#4d0052"/><polygon points="8,11.5 15.9,7.5 15.9,9.9 7.8,14.8" fill="#fff"/><path d="M7.6 15.2 L15.9 10.2" stroke="#2e0030" stroke-width="1.5" fill="none"/><path d="M8 13.2 L15.9 8.8" stroke="#c9c9c9" stroke-width="0.5" fill="none"/><path d="M1 5.5 L8 11.7" stroke="#d27fd6" stroke-width="0.9" fill="none"/></svg><svg class="ic" style="left:35.00px;top:681.23px" width="8.7" height="8.7" viewBox="0 0 9 9"><rect x="0.5" y="0.5" width="8" height="8" fill="#fff" stroke="#8a8a8a" stroke-width="1"/><path d="M2.2 4.5 H6.8" stroke="#000" stroke-width="1.1"/><path d="M4.5 2.2 V6.8" stroke="#000" stroke-width="1.1"/></svg><svg class="ic" style="left:49.00px;top:677.03px" width="15.1" height="15.1" viewBox="0 0 16 16"><polygon points="0.2,4.6 8.4,0.5 15.9,7.5 8,11.5" fill="#7c057f"/><polygon points="0.2,4.6 8,11.5 7.7,15.6 0.2,8.8" fill="#4d0052"/><polygon points="8,11.5 15.9,7.5 15.9,9.9 7.8,14.8" fill="#fff"/><path d="M7.6 15.2 L15.9 10.2" stroke="#2e0030" stroke-width="1.5" fill="none"/><path d="M8 13.2 L15.9 8.8" stroke="#c9c9c9" stroke-width="0.5" fill="none"/><path d="M1 5.5 L8 11.7" stroke="#d27fd6" stroke-width="0.9" fill="none"/></svg><svg class="ic" style="left:35.00px;top:696.32px" width="8.7" height="8.7" viewBox="0 0 9 9"><rect x="0.5" y="0.5" width="8" height="8" fill="#fff" stroke="#8a8a8a" stroke-width="1"/><path d="M2.2 4.5 H6.8" stroke="#000" stroke-width="1.1"/><path d="M4.5 2.2 V6.8" stroke="#000" stroke-width="1.1"/></svg><svg class="ic" style="left:49.00px;top:692.12px" width="15.1" height="15.1" viewBox="0 0 16 16"><polygon points="0.2,4.6 8.4,0.5 15.9,7.5 8,11.5" fill="#7c057f"/><polygon points="0.2,4.6 8,11.5 7.7,15.6 0.2,8.8" fill="#4d0052"/><polygon points="8,11.5 15.9,7.5 15.9,9.9 7.8,14.8" fill="#fff"/><path d="M7.6 15.2 L15.9 10.2" stroke="#2e0030" stroke-width="1.5" fill="none"/><path d="M8 13.2 L15.9 8.8" stroke="#c9c9c9" stroke-width="0.5" fill="none"/><path d="M1 5.5 L8 11.7" stroke="#d27fd6" stroke-width="0.9" fill="none"/></svg><svg class="ic" style="left:35.00px;top:711.41px" width="8.7" height="8.7" viewBox="0 0 9 9"><rect x="0.5" y="0.5" width="8" height="8" fill="#fff" stroke="#8a8a8a" stroke-width="1"/><path d="M2.2 4.5 H6.8" stroke="#000" stroke-width="1.1"/><path d="M4.5 2.2 V6.8" stroke="#000" stroke-width="1.1"/></svg><svg class="ic" style="left:49.00px;top:707.21px" width="15.1" height="15.1" viewBox="0 0 16 16"><polygon points="0.2,4.6 8.4,0.5 15.9,7.5 8,11.5" fill="#7c057f"/><polygon points="0.2,4.6 8,11.5 7.7,15.6 0.2,8.8" fill="#4d0052"/><polygon points="8,11.5 15.9,7.5 15.9,9.9 7.8,14.8" fill="#fff"/><path d="M7.6 15.2 L15.9 10.2" stroke="#2e0030" stroke-width="1.5" fill="none"/><path d="M8 13.2 L15.9 8.8" stroke="#c9c9c9" stroke-width="0.5" fill="none"/><path d="M1 5.5 L8 11.7" stroke="#d27fd6" stroke-width="0.9" fill="none"/></svg><svg class="ic" style="left:35.00px;top:726.50px" width="8.7" height="8.7" viewBox="0 0 9 9"><rect x="0.5" y="0.5" width="8" height="8" fill="#fff" stroke="#8a8a8a" stroke-width="1"/><path d="M2.2 4.5 H6.8" stroke="#000" stroke-width="1.1"/><path d="M4.5 2.2 V6.8" stroke="#000" stroke-width="1.1"/></svg><svg class="ic" style="left:49.00px;top:722.30px" width="15.1" height="15.1" viewBox="0 0 16 16"><polygon points="0.2,4.6 8.4,0.5 15.9,7.5 8,11.5" fill="#7c057f"/><polygon points="0.2,4.6 8,11.5 7.7,15.6 0.2,8.8" fill="#4d0052"/><polygon points="8,11.5 15.9,7.5 15.9,9.9 7.8,14.8" fill="#fff"/><path d="M7.6 15.2 L15.9 10.2" stroke="#2e0030" stroke-width="1.5" fill="none"/><path d="M8 13.2 L15.9 8.8" stroke="#c9c9c9" stroke-width="0.5" fill="none"/><path d="M1 5.5 L8 11.7" stroke="#d27fd6" stroke-width="0.9" fill="none"/></svg><svg class="ic" style="left:35.00px;top:741.60px" width="8.7" height="8.7" viewBox="0 0 9 9"><rect x="0.5" y="0.5" width="8" height="8" fill="#fff" stroke="#8a8a8a" stroke-width="1"/><path d="M2.2 4.5 H6.8" stroke="#000" stroke-width="1.1"/><path d="M4.5 2.2 V6.8" stroke="#000" stroke-width="1.1"/></svg><svg class="ic" style="left:49.00px;top:737.40px" width="15.1" height="15.1" viewBox="0 0 16 16"><polygon points="0.2,4.6 8.4,0.5 15.9,7.5 8,11.5" fill="#7c057f"/><polygon points="0.2,4.6 8,11.5 7.7,15.6 0.2,8.8" fill="#4d0052"/><polygon points="8,11.5 15.9,7.5 15.9,9.9 7.8,14.8" fill="#fff"/><path d="M7.6 15.2 L15.9 10.2" stroke="#2e0030" stroke-width="1.5" fill="none"/><path d="M8 13.2 L15.9 8.8" stroke="#c9c9c9" stroke-width="0.5" fill="none"/><path d="M1 5.5 L8 11.7" stroke="#d27fd6" stroke-width="0.9" fill="none"/></svg><svg class="ic" style="left:35.00px;top:756.69px" width="8.7" height="8.7" viewBox="0 0 9 9"><rect x="0.5" y="0.5" width="8" height="8" fill="#fff" stroke="#8a8a8a" stroke-width="1"/><path d="M2.2 4.5 H6.8" stroke="#000" stroke-width="1.1"/><path d="M4.5 2.2 V6.8" stroke="#000" stroke-width="1.1"/></svg><svg class="ic" style="left:49.00px;top:752.49px" width="15.1" height="15.1" viewBox="0 0 16 16"><polygon points="0.2,4.6 8.4,0.5 15.9,7.5 8,11.5" fill="#7c057f"/><polygon points="0.2,4.6 8,11.5 7.7,15.6 0.2,8.8" fill="#4d0052"/><polygon points="8,11.5 15.9,7.5 15.9,9.9 7.8,14.8" fill="#fff"/><path d="M7.6 15.2 L15.9 10.2" stroke="#2e0030" stroke-width="1.5" fill="none"/><path d="M8 13.2 L15.9 8.8" stroke="#c9c9c9" stroke-width="0.5" fill="none"/><path d="M1 5.5 L8 11.7" stroke="#d27fd6" stroke-width="0.9" fill="none"/></svg><svg class="ic" style="left:35.00px;top:771.78px" width="8.7" height="8.7" viewBox="0 0 9 9"><rect x="0.5" y="0.5" width="8" height="8" fill="#fff" stroke="#8a8a8a" stroke-width="1"/><path d="M2.2 4.5 H6.8" stroke="#000" stroke-width="1.1"/><path d="M4.5 2.2 V6.8" stroke="#000" stroke-width="1.1"/></svg><svg class="ic" style="left:49.00px;top:767.58px" width="15.1" height="15.1" viewBox="0 0 16 16"><polygon points="0.2,4.6 8.4,0.5 15.9,7.5 8,11.5" fill="#7c057f"/><polygon points="0.2,4.6 8,11.5 7.7,15.6 0.2,8.8" fill="#4d0052"/><polygon points="8,11.5 15.9,7.5 15.9,9.9 7.8,14.8" fill="#fff"/><path d="M7.6 15.2 L15.9 10.2" stroke="#2e0030" stroke-width="1.5" fill="none"/><path d="M8 13.2 L15.9 8.8" stroke="#c9c9c9" stroke-width="0.5" fill="none"/><path d="M1 5.5 L8 11.7" stroke="#d27fd6" stroke-width="0.9" fill="none"/></svg><svg class="ic" style="left:17.00px;top:786.87px" width="8.7" height="8.7" viewBox="0 0 9 9"><rect x="0.5" y="0.5" width="8" height="8" fill="#fff" stroke="#8a8a8a" stroke-width="1"/><path d="M2.2 4.5 H6.8" stroke="#000" stroke-width="1.1"/></svg><svg class="ic" style="left:31.00px;top:782.17px" width="16" height="16" viewBox="0 0 16 16"><polygon points="7,13.7 12.3,11.7 12.3,4.5 13.9,5 13.9,13.9" fill="#f3e6f3"/><path d="M1.6 2.7 L1.6 10.6 L5.5 14.6 L14.6 14.6 L14.6 5.4 C14.6 4.5 13.6 4.2 12.6 4.2" fill="none" stroke="#2d0b38" stroke-width="1.5"/><path d="M3.5 0.5 L2.5 2.9 L2.6 10.2 L5.6 13.7 L6.4 13.7 L6.4 4.8 C5.6 3.4 4.6 2 3.5 0.5 Z" fill="#fff" stroke="#b0b0b0" stroke-width="0.5"/><path d="M6.7 4.8 V13.9" stroke="#2d0b38" stroke-width="0.9"/><path d="M7.1 5 C7.7 3.2 10 2.4 11.8 3.2 L12.2 11.6 C10.5 11.2 8.5 12 7.1 13.5 Z" fill="#f6f1d6" stroke="#b5aca8" stroke-width="0.5"/></svg><svg class="ic" style="left:35.00px;top:801.96px" width="8.7" height="8.7" viewBox="0 0 9 9"><rect x="0.5" y="0.5" width="8" height="8" fill="#fff" stroke="#8a8a8a" stroke-width="1"/><path d="M2.2 4.5 H6.8" stroke="#000" stroke-width="1.1"/><path d="M4.5 2.2 V6.8" stroke="#000" stroke-width="1.1"/></svg><svg class="ic" style="left:49.00px;top:797.76px" width="15.1" height="15.1" viewBox="0 0 16 16"><polygon points="0.2,4.6 8.4,0.5 15.9,7.5 8,11.5" fill="#7c057f"/><polygon points="0.2,4.6 8,11.5 7.7,15.6 0.2,8.8" fill="#4d0052"/><polygon points="8,11.5 15.9,7.5 15.9,9.9 7.8,14.8" fill="#fff"/><path d="M7.6 15.2 L15.9 10.2" stroke="#2e0030" stroke-width="1.5" fill="none"/><path d="M8 13.2 L15.9 8.8" stroke="#c9c9c9" stroke-width="0.5" fill="none"/><path d="M1 5.5 L8 11.7" stroke="#d27fd6" stroke-width="0.9" fill="none"/></svg><svg class="ic" style="left:35.00px;top:817.05px" width="8.7" height="8.7" viewBox="0 0 9 9"><rect x="0.5" y="0.5" width="8" height="8" fill="#fff" stroke="#8a8a8a" stroke-width="1"/><path d="M2.2 4.5 H6.8" stroke="#000" stroke-width="1.1"/><path d="M4.5 2.2 V6.8" stroke="#000" stroke-width="1.1"/></svg><svg class="ic" style="left:49.00px;top:812.85px" width="15.1" height="15.1" viewBox="0 0 16 16"><polygon points="0.2,4.6 8.4,0.5 15.9,7.5 8,11.5" fill="#7c057f"/><polygon points="0.2,4.6 8,11.5 7.7,15.6 0.2,8.8" fill="#4d0052"/><polygon points="8,11.5 15.9,7.5 15.9,9.9 7.8,14.8" fill="#fff"/><path d="M7.6 15.2 L15.9 10.2" stroke="#2e0030" stroke-width="1.5" fill="none"/><path d="M8 13.2 L15.9 8.8" stroke="#c9c9c9" stroke-width="0.5" fill="none"/><path d="M1 5.5 L8 11.7" stroke="#d27fd6" stroke-width="0.9" fill="none"/></svg><svg class="ic" style="left:35.00px;top:832.14px" width="8.7" height="8.7" viewBox="0 0 9 9"><rect x="0.5" y="0.5" width="8" height="8" fill="#fff" stroke="#8a8a8a" stroke-width="1"/><path d="M2.2 4.5 H6.8" stroke="#000" stroke-width="1.1"/><path d="M4.5 2.2 V6.8" stroke="#000" stroke-width="1.1"/></svg><svg class="ic" style="left:49.00px;top:827.94px" width="15.1" height="15.1" viewBox="0 0 16 16"><polygon points="0.2,4.6 8.4,0.5 15.9,7.5 8,11.5" fill="#7c057f"/><polygon points="0.2,4.6 8,11.5 7.7,15.6 0.2,8.8" fill="#4d0052"/><polygon points="8,11.5 15.9,7.5 15.9,9.9 7.8,14.8" fill="#fff"/><path d="M7.6 15.2 L15.9 10.2" stroke="#2e0030" stroke-width="1.5" fill="none"/><path d="M8 13.2 L15.9 8.8" stroke="#c9c9c9" stroke-width="0.5" fill="none"/><path d="M1 5.5 L8 11.7" stroke="#d27fd6" stroke-width="0.9" fill="none"/></svg><svg class="ic" style="left:35.00px;top:847.23px" width="8.7" height="8.7" viewBox="0 0 9 9"><rect x="0.5" y="0.5" width="8" height="8" fill="#fff" stroke="#8a8a8a" stroke-width="1"/><path d="M2.2 4.5 H6.8" stroke="#000" stroke-width="1.1"/><path d="M4.5 2.2 V6.8" stroke="#000" stroke-width="1.1"/></svg><svg class="ic" style="left:49.00px;top:843.03px" width="15.1" height="15.1" viewBox="0 0 16 16"><polygon points="0.2,4.6 8.4,0.5 15.9,7.5 8,11.5" fill="#7c057f"/><polygon points="0.2,4.6 8,11.5 7.7,15.6 0.2,8.8" fill="#4d0052"/><polygon points="8,11.5 15.9,7.5 15.9,9.9 7.8,14.8" fill="#fff"/><path d="M7.6 15.2 L15.9 10.2" stroke="#2e0030" stroke-width="1.5" fill="none"/><path d="M8 13.2 L15.9 8.8" stroke="#c9c9c9" stroke-width="0.5" fill="none"/><path d="M1 5.5 L8 11.7" stroke="#d27fd6" stroke-width="0.9" fill="none"/></svg><svg class="ic" style="left:35.00px;top:862.33px" width="8.7" height="8.7" viewBox="0 0 9 9"><rect x="0.5" y="0.5" width="8" height="8" fill="#fff" stroke="#8a8a8a" stroke-width="1"/><path d="M2.2 4.5 H6.8" stroke="#000" stroke-width="1.1"/><path d="M4.5 2.2 V6.8" stroke="#000" stroke-width="1.1"/></svg><svg class="ic" style="left:49.00px;top:858.13px" width="15.1" height="15.1" viewBox="0 0 16 16"><polygon points="0.2,4.6 8.4,0.5 15.9,7.5 8,11.5" fill="#7c057f"/><polygon points="0.2,4.6 8,11.5 7.7,15.6 0.2,8.8" fill="#4d0052"/><polygon points="8,11.5 15.9,7.5 15.9,9.9 7.8,14.8" fill="#fff"/><path d="M7.6 15.2 L15.9 10.2" stroke="#2e0030" stroke-width="1.5" fill="none"/><path d="M8 13.2 L15.9 8.8" stroke="#c9c9c9" stroke-width="0.5" fill="none"/><path d="M1 5.5 L8 11.7" stroke="#d27fd6" stroke-width="0.9" fill="none"/></svg><svg class="ic" style="left:35.00px;top:877.42px" width="8.7" height="8.7" viewBox="0 0 9 9"><rect x="0.5" y="0.5" width="8" height="8" fill="#fff" stroke="#8a8a8a" stroke-width="1"/><path d="M2.2 4.5 H6.8" stroke="#000" stroke-width="1.1"/><path d="M4.5 2.2 V6.8" stroke="#000" stroke-width="1.1"/></svg><svg class="ic" style="left:49.00px;top:873.22px" width="15.1" height="15.1" viewBox="0 0 16 16"><polygon points="0.2,4.6 8.4,0.5 15.9,7.5 8,11.5" fill="#7c057f"/><polygon points="0.2,4.6 8,11.5 7.7,15.6 0.2,8.8" fill="#4d0052"/><polygon points="8,11.5 15.9,7.5 15.9,9.9 7.8,14.8" fill="#fff"/><path d="M7.6 15.2 L15.9 10.2" stroke="#2e0030" stroke-width="1.5" fill="none"/><path d="M8 13.2 L15.9 8.8" stroke="#c9c9c9" stroke-width="0.5" fill="none"/><path d="M1 5.5 L8 11.7" stroke="#d27fd6" stroke-width="0.9" fill="none"/></svg><svg class="ic" style="left:35.00px;top:892.51px" width="8.7" height="8.7" viewBox="0 0 9 9"><rect x="0.5" y="0.5" width="8" height="8" fill="#fff" stroke="#8a8a8a" stroke-width="1"/><path d="M2.2 4.5 H6.8" stroke="#000" stroke-width="1.1"/><path d="M4.5 2.2 V6.8" stroke="#000" stroke-width="1.1"/></svg><svg class="ic" style="left:49.00px;top:888.31px" width="15.1" height="15.1" viewBox="0 0 16 16"><polygon points="0.2,4.6 8.4,0.5 15.9,7.5 8,11.5" fill="#7c057f"/><polygon points="0.2,4.6 8,11.5 7.7,15.6 0.2,8.8" fill="#4d0052"/><polygon points="8,11.5 15.9,7.5 15.9,9.9 7.8,14.8" fill="#fff"/><path d="M7.6 15.2 L15.9 10.2" stroke="#2e0030" stroke-width="1.5" fill="none"/><path d="M8 13.2 L15.9 8.8" stroke="#c9c9c9" stroke-width="0.5" fill="none"/><path d="M1 5.5 L8 11.7" stroke="#d27fd6" stroke-width="0.9" fill="none"/></svg><svg class="ic" style="left:35.00px;top:907.60px" width="8.7" height="8.7" viewBox="0 0 9 9"><rect x="0.5" y="0.5" width="8" height="8" fill="#fff" stroke="#8a8a8a" stroke-width="1"/><path d="M2.2 4.5 H6.8" stroke="#000" stroke-width="1.1"/><path d="M4.5 2.2 V6.8" stroke="#000" stroke-width="1.1"/></svg><svg class="ic" style="left:49.00px;top:903.40px" width="15.1" height="15.1" viewBox="0 0 16 16"><polygon points="0.2,4.6 8.4,0.5 15.9,7.5 8,11.5" fill="#7c057f"/><polygon points="0.2,4.6 8,11.5 7.7,15.6 0.2,8.8" fill="#4d0052"/><polygon points="8,11.5 15.9,7.5 15.9,9.9 7.8,14.8" fill="#fff"/><path d="M7.6 15.2 L15.9 10.2" stroke="#2e0030" stroke-width="1.5" fill="none"/><path d="M8 13.2 L15.9 8.8" stroke="#c9c9c9" stroke-width="0.5" fill="none"/><path d="M1 5.5 L8 11.7" stroke="#d27fd6" stroke-width="0.9" fill="none"/></svg><svg class="ic" style="left:49.00px;top:918.49px" width="15.1" height="15.1" viewBox="0 0 16 16"><polygon points="0.2,4.6 8.4,0.5 15.9,7.5 8,11.5" fill="#7c057f"/><polygon points="0.2,4.6 8,11.5 7.7,15.6 0.2,8.8" fill="#4d0052"/><polygon points="8,11.5 15.9,7.5 15.9,9.9 7.8,14.8" fill="#fff"/><path d="M7.6 15.2 L15.9 10.2" stroke="#2e0030" stroke-width="1.5" fill="none"/><path d="M8 13.2 L15.9 8.8" stroke="#c9c9c9" stroke-width="0.5" fill="none"/><path d="M1 5.5 L8 11.7" stroke="#d27fd6" stroke-width="0.9" fill="none"/></svg></div></div>
<div class="abs" id="txt" style="left:0;top:0;width:1024px;height:1024px;will-change:transform"><span class="t" style="left:202.80px;top:182.68px;color:#fff;font-family:'Liberation Sans', sans-serif;font-size:16.8px;font-weight:bold;font-style:normal;transform:scaleX(1.0802);transform-origin:0 0;">BCM2  Dump Editor</span><span class="t" style="left:902.00px;top:182.44px;color:#4a2f8f;font-family:'Liberation Sans', sans-serif;font-size:12px;font-weight:normal;font-style:normal;letter-spacing:0.080px;text-decoration:underline;">Top</span><span class="t" style="left:928.00px;top:182.44px;color:#1c6dc0;font-family:'Liberation Sans', sans-serif;font-size:12px;font-weight:normal;font-style:normal;letter-spacing:-0.273px;text-decoration:underline;">Previous</span><span class="t" style="left:978.75px;top:182.44px;color:#6b2fa8;font-family:'Liberation Sans', sans-serif;font-size:12px;font-weight:normal;font-style:normal;letter-spacing:-0.609px;text-decoration:underline;">Next</span><span class="t" style="left:201.80px;top:214.29px;color:#15156b;font-family:'Liberation Serif', serif;font-size:18.4px;font-weight:bold;font-style:normal;transform:scaleX(1.0548);transform-origin:0 0;-webkit-text-stroke:0.2px #15156b;">BCM2 (Dump Editor)</span><span class="t" style="left:201.80px;top:250.66px;color:#1a1a9c;font-family:'Liberation Serif', serif;font-size:17px;font-weight:bold;font-style:normal;transform:scaleX(1.1135);transform-origin:0 0;-webkit-text-stroke:0.2px #1a1a9c;">Ver.1</span><span class="t" style="left:202.00px;top:269.95px;color:#000;font-family:'Liberation Serif', serif;font-size:15.1px;font-weight:normal;font-style:normal;letter-spacing:-0.417px;">Data Location</span><span class="t" style="left:340.00px;top:269.95px;color:#000;font-family:'Liberation Serif', serif;font-size:15.1px;font-weight:normal;font-style:normal;letter-spacing:-0.154px;">MCU NEC + EEPROM 95320</span><span class="t" style="left:202.00px;top:288.20px;color:#000;font-family:'Liberation Serif', serif;font-size:15.1px;font-weight:normal;font-style:normal;letter-spacing:-0.430px;">EEPROM Size</span><span class="t" style="left:340.00px;top:288.20px;color:#000;font-family:'Liberation Serif', serif;font-size:15.1px;font-weight:normal;font-style:normal;letter-spacing:-0.391px;">4kB</span><span class="t" style="left:202.00px;top:305.70px;color:#000;font-family:'Liberation Serif', serif;font-size:15.1px;font-weight:normal;font-style:normal;letter-spacing:-0.334px;">FLASH Size (NEC)</span><span class="t" style="left:340.00px;top:305.70px;color:#000;font-family:'Liberation Serif', serif;font-size:15.1px;font-weight:normal;font-style:normal;letter-spacing:-0.542px;">max 2MB</span><span class="t" style="left:201.80px;top:324.76px;color:#1a1a9c;font-family:'Liberation Serif', serif;font-size:17px;font-weight:bold;font-style:normal;transform:scaleX(1.1203);transform-origin:0 0;-webkit-text-stroke:0.2px #1a1a9c;">Ver.2</span><span class="t" style="left:202.00px;top:344.45px;color:#000;font-family:'Liberation Serif', serif;font-size:15.1px;font-weight:normal;font-style:normal;letter-spacing:-0.417px;">Data Location</span><span class="t" style="left:341.50px;top:344.45px;color:#000;font-family:'Liberation Serif', serif;font-size:15.1px;font-weight:normal;font-style:normal;letter-spacing:-0.123px;">MCU NEC</span><span class="t" style="left:202.00px;top:361.95px;color:#000;font-family:'Liberation Serif', serif;font-size:15.1px;font-weight:normal;font-style:normal;letter-spacing:-0.368px;">EEPROM Size (NEC)</span><span class="t" style="left:341.50px;top:361.95px;color:#000;font-family:'Liberation Serif', serif;font-size:15.1px;font-weight:normal;font-style:normal;letter-spacing:-0.430px;">64kB</span><span class="t" style="left:202.00px;top:379.95px;color:#000;font-family:'Liberation Serif', serif;font-size:15.1px;font-weight:normal;font-style:normal;letter-spacing:-0.334px;">FLASH Size (NEC)</span><span class="t" style="left:341.50px;top:379.95px;color:#000;font-family:'Liberation Serif', serif;font-size:15.1px;font-weight:normal;font-style:normal;letter-spacing:-0.578px;">max 2MB</span><span class="t" style="left:202.00px;top:413.20px;color:#000;font-family:'Liberation Serif', serif;font-size:15.1px;font-weight:normal;font-style:normal;letter-spacing:-0.442px;">The BCM2 unit contains some security data that is necessary in cases of unit replacement or modifying.</span><span class="t" style="left:202.00px;top:431.45px;color:#000;font-family:'Liberation Serif', serif;font-size:15.1px;font-weight:normal;font-style:normal;letter-spacing:-0.349px;">Depending on the unit generation, the data is encrypted and stored in the eeprom 95320 or in the NEC's data flash.</span><span class="t" style="left:202.00px;top:448.95px;color:#000;font-family:'Liberation Serif', serif;font-size:15.1px;font-weight:normal;font-style:normal;letter-spacing:-0.242px;">To decrypt data it is necessary to read the 95320 + NEC Flash or NEC DataFlash + NEC ProgramFlash.</span><span class="t" style="left:201.80px;top:483.66px;color:#1a1a9c;font-family:'Liberation Serif', serif;font-size:17px;font-weight:bold;font-style:normal;transform:scaleX(1.0754);transform-origin:0 0;-webkit-text-stroke:0.2px #1a1a9c;">Features</span><span class="t" style="left:202.00px;top:502.70px;color:#000;font-family:'Liberation Serif', serif;font-size:15.1px;font-weight:bold;font-style:normal;transform:scaleX(1.0177);transform-origin:0 0;">Basic</span><span class="t" style="left:202.00px;top:573.70px;color:#000;font-family:'Liberation Serif', serif;font-size:15.1px;font-weight:bold;font-style:normal;transform:scaleX(0.9252);transform-origin:0 0;">Editing</span><span class="t" style="left:202.30px;top:521.95px;color:#000;font-family:'Liberation Serif', serif;font-size:24px;font-weight:normal;font-style:normal;">•</span><span class="t" style="left:214.50px;top:522.45px;color:#000;font-family:'Liberation Serif', serif;font-size:15.1px;font-weight:normal;font-style:normal;letter-spacing:-0.488px;">Dump decoding</span><span class="t" style="left:202.30px;top:540.95px;color:#000;font-family:'Liberation Serif', serif;font-size:24px;font-weight:normal;font-style:normal;">•</span><span class="t" style="left:214.50px;top:541.45px;color:#000;font-family:'Liberation Serif', serif;font-size:15.1px;font-weight:normal;font-style:normal;letter-spacing:-0.480px;">CRC calculation</span><span class="t" style="left:202.30px;top:591.95px;color:#000;font-family:'Liberation Serif', serif;font-size:24px;font-weight:normal;font-style:normal;">•</span><span class="t" style="left:214.50px;top:592.45px;color:#000;font-family:'Liberation Serif', serif;font-size:15.1px;font-weight:normal;font-style:normal;letter-spacing:-0.443px;">VIN</span><span class="t" style="left:202.30px;top:611.45px;color:#000;font-family:'Liberation Serif', serif;font-size:24px;font-weight:normal;font-style:normal;">•</span><span class="t" style="left:214.50px;top:611.95px;color:#000;font-family:'Liberation Serif', serif;font-size:15.1px;font-weight:normal;font-style:normal;letter-spacing:-0.350px;">Component Protection</span><span class="t" style="left:202.30px;top:629.70px;color:#000;font-family:'Liberation Serif', serif;font-size:24px;font-weight:normal;font-style:normal;">•</span><span class="t" style="left:214.50px;top:630.20px;color:#000;font-family:'Liberation Serif', serif;font-size:15.1px;font-weight:normal;font-style:normal;letter-spacing:-0.328px;">PowerClass</span><span class="t" style="left:202.30px;top:648.95px;color:#000;font-family:'Liberation Serif', serif;font-size:24px;font-weight:normal;font-style:normal;">•</span><span class="t" style="left:214.50px;top:649.45px;color:#000;font-family:'Liberation Serif', serif;font-size:15.1px;font-weight:normal;font-style:normal;letter-spacing:-0.464px;">MAC</span><span class="t" style="left:202.30px;top:667.70px;color:#000;font-family:'Liberation Serif', serif;font-size:24px;font-weight:normal;font-style:normal;">•</span><span class="t" style="left:214.50px;top:668.20px;color:#000;font-family:'Liberation Serif', serif;font-size:15.1px;font-weight:normal;font-style:normal;letter-spacing:-0.497px;">ECU Loagin</span><span class="t" style="left:202.30px;top:686.95px;color:#000;font-family:'Liberation Serif', serif;font-size:24px;font-weight:normal;font-style:normal;">•</span><span class="t" style="left:214.50px;top:687.45px;color:#000;font-family:'Liberation Serif', serif;font-size:15.1px;font-weight:normal;font-style:normal;letter-spacing:-0.611px;">Configuration</span><span class="t" style="left:202.30px;top:705.20px;color:#000;font-family:'Liberation Serif', serif;font-size:24px;font-weight:normal;font-style:normal;">•</span><span class="t" style="left:214.50px;top:705.70px;color:#000;font-family:'Liberation Serif', serif;font-size:15.1px;font-weight:normal;font-style:normal;letter-spacing:-0.258px;">Keys</span><span class="t" style="left:201.80px;top:740.66px;color:#1a1a9c;font-family:'Liberation Serif', serif;font-size:17px;font-weight:bold;font-style:normal;transform:scaleX(1.0411);transform-origin:0 0;-webkit-text-stroke:0.2px #1a1a9c;">Dump loading</span><span class="t" style="left:202.00px;top:759.70px;color:#000;font-family:'Liberation Serif', serif;font-size:15.1px;font-weight:bold;font-style:italic;transform:scaleX(1.0088);transform-origin:0 0;">At the earliest models of BCM2 it is not necessary to read the NEC</span><span class="t" style="left:619.80px;top:759.70px;color:#000;font-family:'Liberation Serif', serif;font-size:15.1px;font-weight:normal;font-style:italic;">.</span><span class="t" style="left:627.00px;top:759.70px;color:#000;font-family:'Liberation Serif', serif;font-size:15.1px;font-weight:normal;font-style:normal;letter-spacing:-0.394px;">The Dump Maker detects this situation when the eeprom</span><span class="t" style="left:202.00px;top:777.70px;color:#000;font-family:'Liberation Serif', serif;font-size:15.1px;font-weight:normal;font-style:normal;letter-spacing:-0.349px;">dump is being loaded and displays an appropriate message. Therefore if you are doubt is NEC's dump necessary or not, begin</span><span class="t" style="left:202.00px;top:795.45px;color:#000;font-family:'Liberation Serif', serif;font-size:15.1px;font-weight:normal;font-style:normal;letter-spacing:-0.368px;">your work with the eeprom. If you have got a message that NEC's dump is not necessary, continue without reading of the NEC,</span><span class="t" style="left:202.00px;top:813.45px;color:#000;font-family:'Liberation Serif', serif;font-size:15.1px;font-weight:normal;font-style:normal;letter-spacing:-0.362px;">if no message displayed, read the NEC and upload its dump.</span><span class="t" style="left:202.00px;top:845.70px;color:#000;font-family:'Liberation Serif', serif;font-size:15.1px;font-weight:normal;font-style:italic;letter-spacing:0.101px;">To load the</span><span class="t" style="left:274.50px;top:845.70px;color:#000;font-family:'Liberation Serif', serif;font-size:15.1px;font-weight:bold;font-style:italic;transform:scaleX(0.9759);transform-origin:0 0;">eeprom</span><span class="t" style="left:324.00px;top:845.70px;color:#000;font-family:'Liberation Serif', serif;font-size:15.1px;font-weight:normal;font-style:italic;letter-spacing:-0.143px;">dump: click</span><span class="t" style="left:399.00px;top:845.70px;color:#1a1a8c;font-family:'Liberation Serif', serif;font-size:15.1px;font-weight:bold;font-style:italic;transform:scaleX(1.0036);transform-origin:0 0;">Load EEPROM</span><span class="t" style="left:503.00px;top:845.70px;color:#000;font-family:'Liberation Serif', serif;font-size:15.1px;font-weight:normal;font-style:italic;letter-spacing:-0.123px;">button.</span><span class="t" style="left:202.00px;top:864.45px;color:#000;font-family:'Liberation Serif', serif;font-size:15.1px;font-weight:normal;font-style:italic;letter-spacing:0.101px;">To load the</span><span class="t" style="left:275.75px;top:864.45px;color:#000;font-family:'Liberation Serif', serif;font-size:15.1px;font-weight:bold;font-style:italic;transform:scaleX(1.0065);transform-origin:0 0;">NEC</span><span class="t" style="left:311.50px;top:864.45px;color:#000;font-family:'Liberation Serif', serif;font-size:15.1px;font-weight:normal;font-style:italic;letter-spacing:-0.156px;">dump click</span><span class="t" style="left:381.25px;top:864.45px;color:#1a1a8c;font-family:'Liberation Serif', serif;font-size:15.1px;font-weight:bold;font-style:italic;transform:scaleX(1.0044);transform-origin:0 0;">Load FLASH</span><span class="t" style="left:471.25px;top:864.45px;color:#000;font-family:'Liberation Serif', serif;font-size:15.1px;font-weight:normal;font-style:italic;letter-spacing:0.067px;">buttton</span><span class="t" style="left:222.50px;top:897.63px;color:#000;font-family:'Liberation Sans', sans-serif;font-size:10.6px;font-weight:normal;font-style:normal;transform:scaleX(0.9415);transform-origin:0 0;">File Open</span><span class="t" style="left:247.50px;top:918.33px;color:#000;font-family:'Liberation Sans', sans-serif;font-size:10.6px;font-weight:normal;font-style:normal;transform:scaleX(0.9422);transform-origin:0 0;">Load EEPROM</span><span class="t" style="left:19.25px;top:155.04px;color:#000;font-family:'Liberation Sans', 'Noto Sans CJK SC', sans-serif;font-size:12px;font-weight:normal;font-style:normal;letter-spacing:-0.633px;-webkit-text-stroke:0.25px #000;">隐藏</span><span class="t" style="left:69.40px;top:155.04px;color:#000;font-family:'Liberation Sans', 'Noto Sans CJK SC', sans-serif;font-size:12px;font-weight:normal;font-style:normal;letter-spacing:-0.772px;-webkit-text-stroke:0.25px #000;">上一步</span><span class="t" style="left:130.00px;top:155.04px;color:#a0a0a0;font-family:'Liberation Sans', 'Noto Sans CJK SC', sans-serif;font-size:12px;font-weight:normal;font-style:normal;letter-spacing:-0.408px;-webkit-text-stroke:0.25px #a0a0a0;">前进</span><span class="t" style="left:186.40px;top:155.04px;color:#000;font-family:'Liberation Sans', 'Noto Sans CJK SC', sans-serif;font-size:12px;font-weight:normal;font-style:normal;letter-spacing:-1.083px;-webkit-text-stroke:0.25px #000;">主页</span><span class="t" style="left:241.75px;top:155.04px;color:#000;font-family:'Liberation Sans', 'Noto Sans CJK SC', sans-serif;font-size:12px;font-weight:normal;font-style:normal;letter-spacing:-0.758px;-webkit-text-stroke:0.25px #000;">打印</span><span class="t" style="left:289.00px;top:155.04px;color:#000;font-family:'Liberation Sans', 'Noto Sans CJK SC', sans-serif;font-size:12px;font-weight:normal;font-style:normal;letter-spacing:-0.509px;-webkit-text-stroke:0.25px #000;">选项(<u>O</u>)</span><span class="t" style="left:15.00px;top:187.44px;color:#000;font-family:'Liberation Sans', 'Noto Sans CJK SC', sans-serif;font-size:12px;font-weight:normal;font-style:normal;letter-spacing:-0.884px;-webkit-text-stroke:0.25px #000;">目录(<u>C</u>)</span><span class="t" style="left:70.60px;top:189.44px;color:#000;font-family:'Liberation Sans', 'Noto Sans CJK SC', sans-serif;font-size:12px;font-weight:normal;font-style:normal;letter-spacing:-0.743px;-webkit-text-stroke:0.25px #000;">搜索(<u>S</u>)</span><span class="t" style="left:128.60px;top:189.44px;color:#000;font-family:'Liberation Sans', 'Noto Sans CJK SC', sans-serif;font-size:12px;font-weight:normal;font-style:normal;letter-spacing:-0.824px;-webkit-text-stroke:0.25px #000;">收藏夹(<u>I</u>)</span><span class="t" style="left:51.25px;top:218.17px;color:#000;font-family:'Liberation Sans', sans-serif;font-size:10.2px;font-weight:normal;font-style:normal;letter-spacing:-0.1px;">Europe</span><span class="t" style="left:69.00px;top:233.26px;color:#000;font-family:'Liberation Sans', sans-serif;font-size:10.2px;font-weight:normal;font-style:normal;letter-spacing:-0.1px;">Alfa Romeo</span><span class="t" style="left:69.00px;top:248.35px;color:#000;font-family:'Liberation Sans', sans-serif;font-size:10.2px;font-weight:normal;font-style:normal;letter-spacing:-0.1px;">Aprilia</span><span class="t" style="left:69.00px;top:263.44px;color:#000;font-family:'Liberation Sans', sans-serif;font-size:10.2px;font-weight:normal;font-style:normal;letter-spacing:-0.1px;">Aston Martin</span><span class="t" style="left:69.00px;top:278.53px;color:#000;font-family:'Liberation Sans', sans-serif;font-size:10.2px;font-weight:normal;font-style:normal;letter-spacing:-0.1px;">Audi</span><span class="t" style="left:69.00px;top:293.62px;color:#000;font-family:'Liberation Sans', sans-serif;font-size:10.2px;font-weight:normal;font-style:normal;letter-spacing:-0.1px;">Bentley</span><span class="t" style="left:69.00px;top:308.71px;color:#000;font-family:'Liberation Sans', sans-serif;font-size:10.2px;font-weight:normal;font-style:normal;letter-spacing:-0.1px;">BMW</span><span class="t" style="left:69.00px;top:323.80px;color:#000;font-family:'Liberation Sans', sans-serif;font-size:10.2px;font-weight:normal;font-style:normal;letter-spacing:-0.1px;">Citroen</span><span class="t" style="left:69.00px;top:338.90px;color:#000;font-family:'Liberation Sans', sans-serif;font-size:10.2px;font-weight:normal;font-style:normal;letter-spacing:-0.1px;">Dacia</span><span class="t" style="left:69.00px;top:353.99px;color:#000;font-family:'Liberation Sans', sans-serif;font-size:10.2px;font-weight:normal;font-style:normal;letter-spacing:-0.1px;">DAF</span><span class="t" style="left:69.00px;top:369.08px;color:#000;font-family:'Liberation Sans', sans-serif;font-size:10.2px;font-weight:normal;font-style:normal;letter-spacing:-0.1px;">Ducati</span><span class="t" style="left:69.00px;top:384.17px;color:#000;font-family:'Liberation Sans', sans-serif;font-size:10.2px;font-weight:normal;font-style:normal;letter-spacing:-0.1px;">Ferrari</span><span class="t" style="left:69.00px;top:399.26px;color:#000;font-family:'Liberation Sans', sans-serif;font-size:10.2px;font-weight:normal;font-style:normal;letter-spacing:-0.1px;">Fiat</span><span class="t" style="left:69.00px;top:414.35px;color:#000;font-family:'Liberation Sans', sans-serif;font-size:10.2px;font-weight:normal;font-style:normal;letter-spacing:-0.1px;">Ford</span><span class="t" style="left:69.00px;top:429.44px;color:#000;font-family:'Liberation Sans', sans-serif;font-size:10.2px;font-weight:normal;font-style:normal;letter-spacing:-0.1px;">Gilera</span><span class="t" style="left:69.00px;top:444.54px;color:#000;font-family:'Liberation Sans', sans-serif;font-size:10.2px;font-weight:normal;font-style:normal;letter-spacing:-0.1px;">Iveco</span><span class="t" style="left:69.00px;top:459.63px;color:#000;font-family:'Liberation Sans', sans-serif;font-size:10.2px;font-weight:normal;font-style:normal;letter-spacing:-0.1px;">Jaguar</span><span class="t" style="left:69.00px;top:474.72px;color:#000;font-family:'Liberation Sans', sans-serif;font-size:10.2px;font-weight:normal;font-style:normal;letter-spacing:-0.1px;">Lancia</span><span class="t" style="left:69.00px;top:489.81px;color:#000;font-family:'Liberation Sans', sans-serif;font-size:10.2px;font-weight:normal;font-style:normal;letter-spacing:-0.1px;">Land Rover</span><span class="t" style="left:69.00px;top:504.90px;color:#000;font-family:'Liberation Sans', sans-serif;font-size:10.2px;font-weight:normal;font-style:normal;letter-spacing:-0.1px;">MAN</span><span class="t" style="left:69.00px;top:519.99px;color:#000;font-family:'Liberation Sans', sans-serif;font-size:10.2px;font-weight:normal;font-style:normal;letter-spacing:-0.1px;">Maserati</span><span class="t" style="left:69.00px;top:535.08px;color:#000;font-family:'Liberation Sans', sans-serif;font-size:10.2px;font-weight:normal;font-style:normal;letter-spacing:-0.1px;">Mercedes</span><span class="t" style="left:69.00px;top:550.17px;color:#000;font-family:'Liberation Sans', sans-serif;font-size:10.2px;font-weight:normal;font-style:normal;letter-spacing:-0.1px;">Opel</span><span class="t" style="left:69.00px;top:565.27px;color:#000;font-family:'Liberation Sans', sans-serif;font-size:10.2px;font-weight:normal;font-style:normal;letter-spacing:-0.1px;">Peugeot</span><span class="t" style="left:69.00px;top:580.36px;color:#000;font-family:'Liberation Sans', sans-serif;font-size:10.2px;font-weight:normal;font-style:normal;letter-spacing:-0.1px;">Piaggio</span><span class="t" style="left:69.00px;top:595.45px;color:#000;font-family:'Liberation Sans', sans-serif;font-size:10.2px;font-weight:normal;font-style:normal;letter-spacing:-0.1px;">Porsche</span><span class="t" style="left:69.00px;top:610.54px;color:#000;font-family:'Liberation Sans', sans-serif;font-size:10.2px;font-weight:normal;font-style:normal;letter-spacing:-0.1px;">Renault</span><span class="t" style="left:69.00px;top:625.63px;color:#000;font-family:'Liberation Sans', sans-serif;font-size:10.2px;font-weight:normal;font-style:normal;letter-spacing:-0.1px;">Rover</span><span class="t" style="left:69.00px;top:640.72px;color:#000;font-family:'Liberation Sans', sans-serif;font-size:10.2px;font-weight:normal;font-style:normal;letter-spacing:-0.1px;">Saab</span><span class="t" style="left:69.00px;top:655.81px;color:#000;font-family:'Liberation Sans', sans-serif;font-size:10.2px;font-weight:normal;font-style:normal;letter-spacing:-0.1px;">Scania</span><span class="t" style="left:69.00px;top:670.90px;color:#000;font-family:'Liberation Sans', sans-serif;font-size:10.2px;font-weight:normal;font-style:normal;letter-spacing:-0.1px;">Seat</span><span class="t" style="left:69.00px;top:686.00px;color:#000;font-family:'Liberation Sans', sans-serif;font-size:10.2px;font-weight:normal;font-style:normal;letter-spacing:-0.1px;">Skoda</span><span class="t" style="left:69.00px;top:701.09px;color:#000;font-family:'Liberation Sans', sans-serif;font-size:10.2px;font-weight:normal;font-style:normal;letter-spacing:-0.1px;">Smart</span><span class="t" style="left:69.00px;top:716.18px;color:#000;font-family:'Liberation Sans', sans-serif;font-size:10.2px;font-weight:normal;font-style:normal;letter-spacing:-0.1px;">UAZ</span><span class="t" style="left:69.00px;top:731.27px;color:#000;font-family:'Liberation Sans', sans-serif;font-size:10.2px;font-weight:normal;font-style:normal;letter-spacing:-0.1px;">VAZ</span><span class="t" style="left:69.00px;top:746.36px;color:#000;font-family:'Liberation Sans', sans-serif;font-size:10.2px;font-weight:normal;font-style:normal;letter-spacing:-0.1px;">Volvo</span><span class="t" style="left:69.00px;top:761.45px;color:#000;font-family:'Liberation Sans', sans-serif;font-size:10.2px;font-weight:normal;font-style:normal;letter-spacing:-0.1px;">Vortex</span><span class="t" style="left:69.00px;top:776.54px;color:#000;font-family:'Liberation Sans', sans-serif;font-size:10.2px;font-weight:normal;font-style:normal;letter-spacing:-0.1px;">VW</span><span class="t" style="left:51.25px;top:791.64px;color:#000;font-family:'Liberation Sans', sans-serif;font-size:10.2px;font-weight:normal;font-style:normal;letter-spacing:-0.1px;">USA</span><span class="t" style="left:69.00px;top:806.73px;color:#000;font-family:'Liberation Sans', sans-serif;font-size:10.2px;font-weight:normal;font-style:normal;letter-spacing:-0.1px;">Bombardier</span><span class="t" style="left:69.00px;top:821.82px;color:#000;font-family:'Liberation Sans', sans-serif;font-size:10.2px;font-weight:normal;font-style:normal;letter-spacing:-0.1px;">Buick</span><span class="t" style="left:69.00px;top:836.91px;color:#000;font-family:'Liberation Sans', sans-serif;font-size:10.2px;font-weight:normal;font-style:normal;letter-spacing:-0.1px;">Cadillac</span><span class="t" style="left:69.00px;top:852.00px;color:#000;font-family:'Liberation Sans', sans-serif;font-size:10.2px;font-weight:normal;font-style:normal;letter-spacing:-0.1px;">Chevrolet</span><span class="t" style="left:69.00px;top:867.09px;color:#000;font-family:'Liberation Sans', sans-serif;font-size:10.2px;font-weight:normal;font-style:normal;letter-spacing:-0.1px;">Chrysler</span><span class="t" style="left:69.00px;top:882.18px;color:#000;font-family:'Liberation Sans', sans-serif;font-size:10.2px;font-weight:normal;font-style:normal;letter-spacing:-0.1px;">Dodge</span><span class="t" style="left:69.00px;top:897.27px;color:#000;font-family:'Liberation Sans', sans-serif;font-size:10.2px;font-weight:normal;font-style:normal;letter-spacing:-0.1px;">Jeep</span><span class="t" style="left:69.00px;top:912.37px;color:#000;font-family:'Liberation Sans', sans-serif;font-size:10.2px;font-weight:normal;font-style:normal;letter-spacing:-0.1px;">Lincoln</span></div>
</body></html>
